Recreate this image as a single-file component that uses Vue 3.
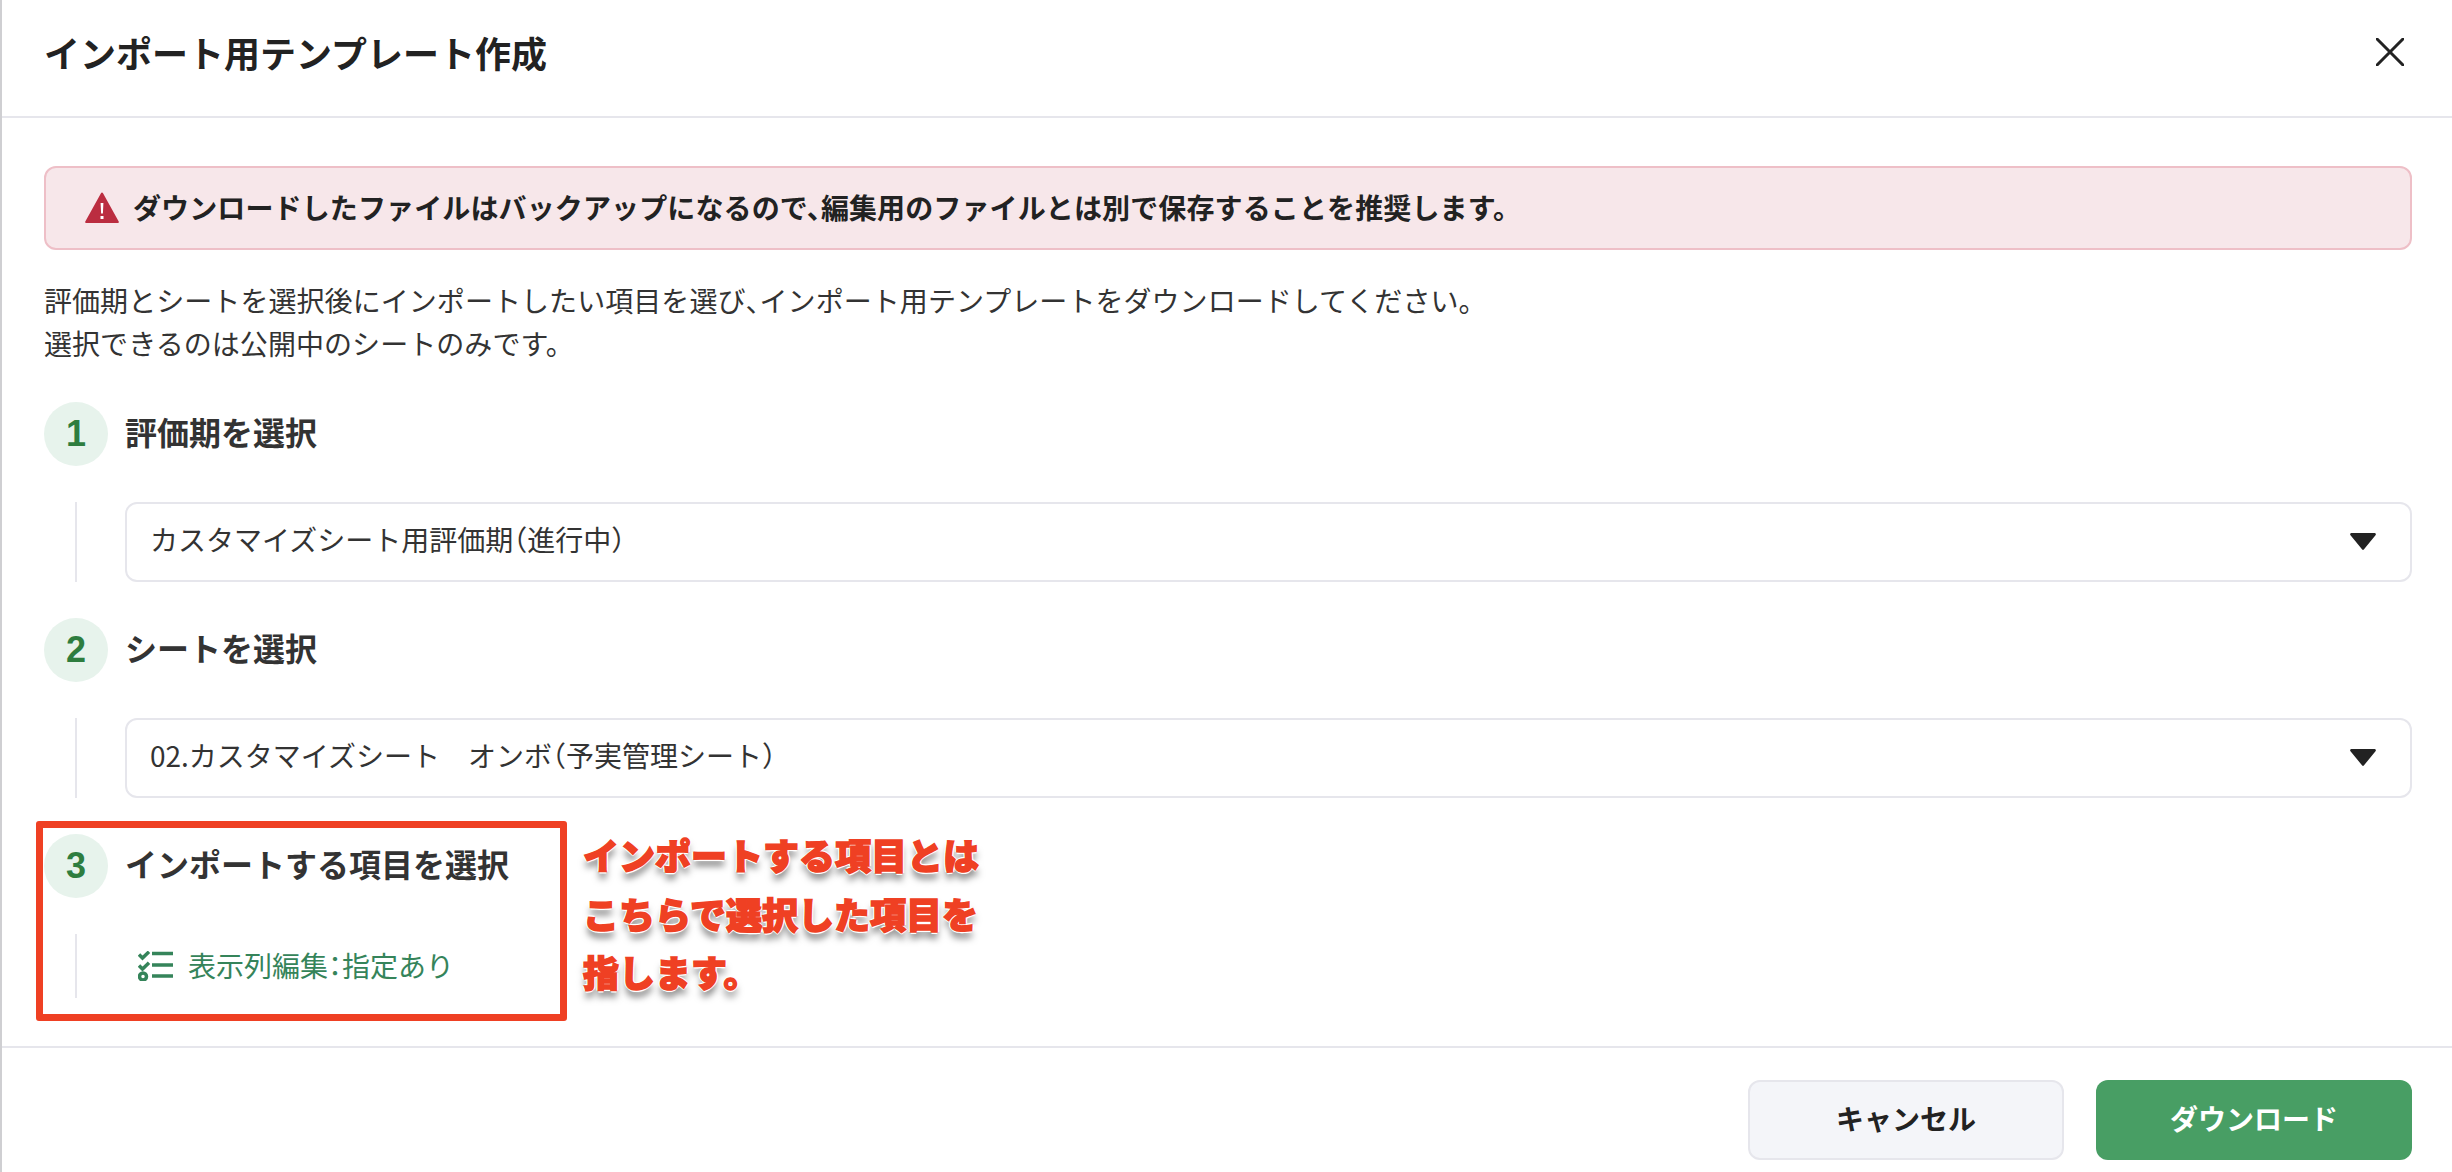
<script setup>
const annotation = ['インポートする項目とは', 'こちらで選択した項目を', '指します。']
const selects = [
  { n: 1, title: '評価期を選択', value: 'カスタマイズシート用評価期（進行中）' },
  { n: 2, title: 'シートを選択', value: '02.カスタマイズシート　オンボ（予実管理シート）' },
]
</script>

<template>
  <div class="dialog">
    <header class="head">
      <h1 class="title">インポート用テンプレート作成</h1>
      <svg class="close" viewBox="0 0 28 28" aria-hidden="true">
        <path d="M1 1 27 27M27 1 1 27" />
      </svg>
    </header>

    <main class="body">
      <div class="alert">
        <svg class="warn" viewBox="0 0 34 31" aria-hidden="true">
          <path class="warn-tri" d="M17 .5a1 1 0 0 1 .9.5l15.8 28.6a1 1 0 0 1-.9 1.4H1.2a1 1 0 0 1-.9-1.4L16.100 1a1 1 0 0 1 .9-.5z" />
          <path class="warn-mark" d="M15.600 11h2.800l-.5 10.500h-1.800zM15.500 24h3v3h-3z" />
        </svg>
        <span>ダウンロードしたファイルはバックアップになるので、編集用のファイルとは別で保存することを推奨します。</span>
      </div>

      <p class="intro">
        評価期とシートを選択後にインポートしたい項目を選び、インポート用テンプレートをダウンロードしてください。<br />
        選択できるのは公開中のシートのみです。
      </p>

      <section v-for="s in selects" :key="s.n" class="step">
        <div class="step-head">
          <span class="num">{{ s.n }}</span>
          <h2 class="step-title">{{ s.title }}</h2>
        </div>
        <div class="step-body">
          <div class="select">
            <span class="select-value">{{ s.value }}</span>
            <svg class="caret" viewBox="0 0 26 17" aria-hidden="true">
              <path d="M1.500 0h23a1.300 1.300 0 0 1 1 2.200L14 16.300a1.300 1.300 0 0 1-2 0L.5 2.200A1.300 1.300 0 0 1 1.500 0z" />
            </svg>
          </div>
        </div>
      </section>

      <section class="step">
        <div class="step-head">
          <span class="num">3</span>
          <h2 class="step-title">インポートする項目を選択</h2>
        </div>
        <div class="step-body short">
          <div class="columns">
            <svg class="list-icon" viewBox="0 0 35 30" aria-hidden="true">
              <path class="thin" d="M1 3.500 4.500 7 11 .8M1 14.500 4.500 18 11 11.800" />
              <circle class="thin" cx="5" cy="25.500" r="3.500" />
              <path class="thick" d="M14 2.500h21M14 14h21M14 25h21" />
            </svg>
            <span class="columns-label">表示列編集：指定あり</span>
          </div>
        </div>
      </section>
    </main>

    <footer class="foot">
      <button class="btn cancel" type="button">キャンセル</button>
      <button class="btn primary" type="button">ダウンロード</button>
    </footer>

    <div class="mark-box"></div>
    <div class="mark-text">
      <div v-for="line in annotation" :key="line" class="mark-line">{{ line }}</div>
    </div>
  </div>
</template>

<style>
html, body { margin: 0; background: #fff; }
</style>

<style scoped>
.dialog {
  position: relative;
  box-sizing: border-box;
  width: 2452px;
  height: 1172px;
  border-left: 2px solid #cfcfd2;
  display: flex;
  flex-direction: column;
  overflow: hidden;
  background: #fff;
  color: #333;
  font-family: "Noto Sans CJK JP", "Noto Sans", sans-serif;
  font-feature-settings: "halt";
}
.head {
  box-sizing: border-box;
  height: 118px;
  flex: none;
  display: flex;
  align-items: center;
  justify-content: space-between;
  padding: 0 48px 12px 42px;
  border-bottom: 2px solid #e6e6ec;
}
.title { margin: 0; font-size: 36px; font-weight: 700; color: #222; line-height: 1.4; }
.close { width: 28px; height: 28px; fill: none; stroke: #222; stroke-width: 3; stroke-linecap: round; }
.body {
  flex: 1;
  min-height: 0;
  padding: 48px 40px 0 42px;
  display: flex;
  flex-direction: column;
}
.alert {
  box-sizing: border-box;
  height: 84px;
  flex: none;
  display: flex;
  align-items: center;
  gap: 14px;
  padding: 0 0 2px 39px;
  background: #f7e7ea;
  border: 2px solid #eebfc7;
  border-radius: 12px;
  font-size: 28px;
  font-weight: 700;
  letter-spacing: .12px;
  color: #222;
}
.warn { width: 34px; height: 31px; flex: none; }
.warn-tri { fill: #bb2d40; }
.warn-mark { fill: #fff; }
.intro { margin: 29px 0 38px; font-size: 28px; line-height: 42.500px; letter-spacing: .06px; color: #333; }
.step { display: flex; flex-direction: column; gap: 36px; margin-bottom: 36px; }
.step-head { display: flex; align-items: center; gap: 17px; height: 64px; }
.num {
  width: 64px;
  height: 64px;
  flex: none;
  border-radius: 50%;
  background: #e7f3ec;
  color: #2e7d3f;
  display: flex;
  align-items: center;
  justify-content: center;
  font-family: "Liberation Sans", sans-serif;
  font-size: 36px;
  font-weight: 700;
}
.step-title { margin: 0 0 6px; font-size: 32px; font-weight: 700; color: #333; }
.step-body {
  margin-left: 31px;
  padding-left: 48px;
  border-left: 2px solid #e6e6ec;
  height: 80px;
  display: flex;
  align-items: stretch;
}
.step-body.short { height: 64px; }
.select {
  box-sizing: border-box;
  flex: 1;
  display: flex;
  align-items: center;
  justify-content: space-between;
  padding: 0 34px 0 23px;
  border: 2px solid #e6e6ec;
  border-radius: 12px;
  font-size: 28px;
  color: #333;
}
.select-value { margin-bottom: 6px; }
.caret { width: 26px; height: 17px; fill: #222; margin-top: -2px; }
.columns {
  display: flex;
  align-items: center;
  gap: 15px;
  padding-left: 13px;
  font-size: 28px;
  color: #35845a;
}
.columns-label { margin-bottom: 3px; }
.list-icon { width: 35px; height: 30px; flex: none; }
.thin { fill: none; stroke: #35845a; stroke-width: 3.500; }
.thick { fill: none; stroke: #35845a; stroke-width: 3.500; }
.foot {
  flex: none;
  box-sizing: border-box;
  height: 126px;
  display: flex;
  justify-content: flex-end;
  gap: 32px;
  padding: 32px 40px 0 0;
  border-top: 2px solid #e6e6ec;
  align-items: flex-start;
}
.btn {
  box-sizing: border-box;
  width: 316px;
  height: 80px;
  padding: 0 0 4px;
  border-radius: 12px;
  font: inherit;
  font-size: 28px;
  font-weight: 700;
}
.cancel { background: #f4f5f9; border: 2px solid #e6e6ec; color: #222; }
.primary { background: #489e64; border: 0; color: #fff; }
.mark-box {
  position: absolute;
  left: 34px;
  top: 821px;
  width: 531px;
  height: 200px;
  box-sizing: border-box;
  border: 7px solid #ef4023;
  border-radius: 3px;
}
.mark-text {
  position: absolute;
  left: 581px;
  top: 825px;
  font-size: 36px;
  font-weight: 900;
  line-height: 58.500px;
  color: #ef4023;
  -webkit-text-stroke: 1.500px #ef4023;
  text-shadow: 0 0 3px #fff, 2px 0 0 #fff, -2px 0 0 #fff, 0 -2px 0 #fff, 0 2px 0 #fff, 0 7px 7px rgba(0, 0, 0, .5);
}
.mark-line { white-space: nowrap; }
</style>
